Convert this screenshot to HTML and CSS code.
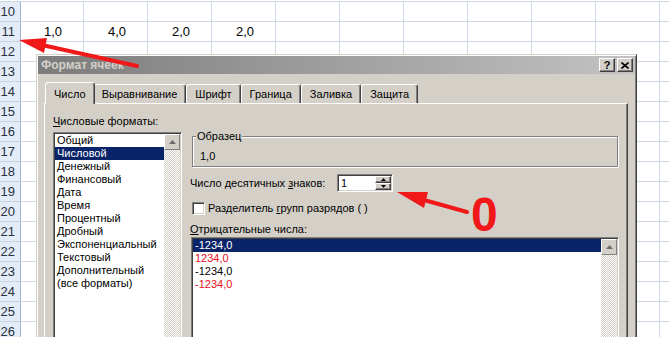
FILE: index.html
```html
<!DOCTYPE html>
<html lang="ru">
<head>
    <meta charset="UTF-8">
    <meta name="viewport" content="width=device-width, initial-scale=1.0">
    <title>Формат ячеек</title>
    <link rel="stylesheet" href="styles.css">
</head>
<body>

<!-- Worksheet behind the dialog -->
<div class="sheet">
    <div class="row"><div class="rh">10</div><div class="cells"></div></div>
    <div class="row"><div class="rh">11</div><div class="cells">
        <span class="cell">1,0</span><span class="cell">4,0</span><span class="cell">2,0</span><span class="cell">2,0</span>
    </div></div>
    <div class="row"><div class="rh">12</div><div class="cells"></div></div>
    <div class="row"><div class="rh">13</div><div class="cells"></div></div>
    <div class="row"><div class="rh">14</div><div class="cells"></div></div>
    <div class="row"><div class="rh">15</div><div class="cells"></div></div>
    <div class="row"><div class="rh">16</div><div class="cells"></div></div>
    <div class="row"><div class="rh">17</div><div class="cells"></div></div>
    <div class="row"><div class="rh">18</div><div class="cells"></div></div>
    <div class="row"><div class="rh">19</div><div class="cells"></div></div>
    <div class="row"><div class="rh">20</div><div class="cells"></div></div>
    <div class="row"><div class="rh">21</div><div class="cells"></div></div>
    <div class="row"><div class="rh">22</div><div class="cells"></div></div>
    <div class="row"><div class="rh">23</div><div class="cells"></div></div>
    <div class="row"><div class="rh">24</div><div class="cells"></div></div>
    <div class="row"><div class="rh">25</div><div class="cells"></div></div>
    <div class="row"><div class="rh">26</div><div class="cells"></div></div>
</div>

<!-- Format Cells dialog -->
<div class="dialog">
    <div class="titlebar">
        <span class="title">Формат ячеек</span>
        <span class="tb-btn">?</span>
        <span class="tb-btn">
            <svg width="8" height="7" viewBox="0 0 8 7"><path d="M0.5 0.5 L7.5 6.5 M7.5 0.5 L0.5 6.5" stroke="#000" stroke-width="1.6"/></svg>
        </span>
    </div>

    <div class="dlg-body">
        <div class="tabs">
            <div class="tab active">Число</div>
            <div class="tab">Выравнивание</div>
            <div class="tab">Шрифт</div>
            <div class="tab">Граница</div>
            <div class="tab">Заливка</div>
            <div class="tab">Защита</div>
        </div>

        <div class="panel">
            <div class="col-left">
                <div class="label"><u>Ч</u>исловые форматы:</div>
                <div class="listbox formats">
                    <ul class="items">
                        <li>Общий</li>
                        <li class="sel">Числовой</li>
                        <li>Денежный</li>
                        <li>Финансовый</li>
                        <li>Дата</li>
                        <li>Время</li>
                        <li>Процентный</li>
                        <li>Дробный</li>
                        <li>Экспоненциальный</li>
                        <li>Текстовый</li>
                        <li>Дополнительный</li>
                        <li>(все форматы)</li>
                    </ul>
                    <div class="vscroll">
                        <span class="sb-up"><svg width="7" height="4" viewBox="0 0 7 4"><polygon points="3.5,0 7,4 0,4" fill="#6b6b6b"/></svg></span>
                    </div>
                </div>
            </div>

            <div class="col-right">
                <fieldset class="sample">
                    <legend>Образец</legend>
                    <div>1,0</div>
                </fieldset>

                <div class="decimals">
                    <span class="dec-label">Число десятичных <u>з</u>наков:</span>
                    <div class="spin">
                        <span class="spin-val">1</span>
                        <div class="spin-btns">
                            <span><svg width="5" height="3" viewBox="0 0 5 3"><polygon points="2.5,0 5,3 0,3" fill="#000"/></svg></span>
                            <span><svg width="5" height="3" viewBox="0 0 5 3"><polygon points="0,0 5,0 2.5,3" fill="#000"/></svg></span>
                        </div>
                    </div>
                </div>

                <div class="check">
                    <span class="box"></span>
                    <span>Разделитель <u>г</u>рупп разрядов ( )</span>
                </div>

                <div class="label neg-label"><u>О</u>трицательные числа:</div>
                <div class="listbox negatives">
                    <ul class="items">
                        <li class="sel">-1234,0</li>
                        <li class="red">1234,0</li>
                        <li>-1234,0</li>
                        <li class="red">-1234,0</li>
                    </ul>
                    <div class="vscroll">
                        <span class="sb-up"><svg width="7" height="4" viewBox="0 0 7 4"><polygon points="3.5,0 7,4 0,4" fill="#6b6b6b"/></svg></span>
                    </div>
                </div>
            </div>
        </div>
    </div>
</div>

<!-- Red annotation arrows drawn over the screenshot -->
<svg class="marks" width="669" height="337" viewBox="0 0 669 337">
    <line x1="137" y1="66" x2="42" y2="45" stroke="#f01818" stroke-width="4" stroke-linecap="round"/>
    <polygon points="19,40 47,38 44,53" fill="#f01818"/>
    <line x1="467" y1="212" x2="424" y2="200" stroke="#f01818" stroke-width="4" stroke-linecap="round"/>
    <polygon points="397,192 428,192 424,208" fill="#f01818"/>
</svg>
<div class="zero">0</div>

</body>
</html>
```

FILE: styles.css
```css
/* Page */
body {
    margin: 0;
    width: 669px;
    height: 337px;
    overflow: hidden;
    position: relative;
    background: #ffffff;
    font-family: "Liberation Sans", Arial, sans-serif;
}

/* Worksheet grid */
.sheet {
    margin-top: 1px;
    border-top: 1px solid #d0d7e5;
}

.row {
    display: flex;
    height: 20px;
}

.rh {
    width: 21px;
    box-sizing: border-box;
    padding-right: 5px;
    text-align: right;
    font-size: 13px;
    line-height: 19px;
    color: #27313f;
    background: #e4ecf7;
    border-right: 1px solid #9eb6ce;
    border-bottom: 1px solid #c5d3e5;
}

.cells {
    flex: 1;
    display: flex;
    box-sizing: border-box;
    border-bottom: 1px solid #d0d7e5;
    background-image: linear-gradient(to right, transparent 62px, #d0d7e5 62px, #d0d7e5 63px, transparent 63px);
    background-size: 64px 100%;
}

.cell {
    width: 64px;
    text-align: center;
    font-size: 13px;
    line-height: 19px;
    color: #000;
}

/* Dialog window */
.dialog {
    position: absolute;
    left: 36px;
    top: 54px;
    width: 601px;
    height: 300px;
    box-sizing: border-box;
    padding: 1px;
    background: #d4d0c8;
    border: 1px solid;
    border-color: #d4d0c8 #404040 #404040 #d4d0c8;
    box-shadow: inset 1px 1px #ffffff, inset -1px -1px #808080;
    font-size: 11px;
    color: #000;
}

.titlebar {
    display: flex;
    align-items: center;
    height: 18px;
    padding: 0 2px 0 3px;
    background: linear-gradient(to right, #7c7c7c, #c2c2c2);
}

.title {
    flex: 1;
    font-weight: bold;
    font-size: 12px;
    color: #d4d0c8;
}

.tb-btn {
    width: 16px;
    height: 14px;
    box-sizing: border-box;
    margin-left: 2px;
    display: flex;
    align-items: center;
    justify-content: center;
    background: #d4d0c8;
    border: 1px solid;
    border-color: #ffffff #404040 #404040 #ffffff;
    box-shadow: inset -1px -1px #808080;
    font-weight: bold;
    font-size: 11px;
    line-height: 11px;
}

.dlg-body {
    padding: 8px 7px 0 6px;
}

/* Tabs */
.tabs {
    display: flex;
    align-items: flex-end;
    height: 21px;
    padding-left: 3px;
    position: relative;
    z-index: 1;
}

.tab {
    height: 19px;
    box-sizing: border-box;
    padding: 3px 8px 0;
    line-height: 13px;
    white-space: nowrap;
    background: #d4d0c8;
    border: 1px solid;
    border-bottom: 0;
    border-color: #ffffff #404040 transparent #ffffff;
    box-shadow: inset -1px 0 #808080;
    border-radius: 3px 3px 0 0;
}

.tab.active {
    height: 22px;
    margin: 0 -2px -1px;
    padding-top: 5px;
    position: relative;
    z-index: 2;
}

/* Tab page */
.panel {
    display: flex;
    gap: 8px;
    height: 240px;
    padding: 11px 8px 0 8px;
    border: 1px solid;
    border-color: #ffffff #404040 #404040 #ffffff;
    box-shadow: inset -1px -1px #808080;
}

.label {
    line-height: 13px;
    white-space: nowrap;
}

.col-left {
    width: 129px;
}

.col-right {
    flex: 1;
    padding-top: 15px;
}

/* List boxes */
.listbox {
    display: flex;
    box-sizing: border-box;
    padding: 1px;
    background: #ffffff;
    border: 1px solid;
    border-color: #808080 #ffffff #ffffff #808080;
    box-shadow: inset 1px 1px #404040, inset -1px -1px #d4d0c8;
}

.formats {
    margin-top: 4px;
    height: 210px;
}

.negatives {
    margin: 1px 0 0 1px;
    height: 110px;
}

.items {
    flex: 1;
    list-style: none;
    margin: 0;
    padding: 0;
}

.items li {
    padding-left: 2px;
    line-height: 13px;
    white-space: nowrap;
}

.items li.sel {
    background: #0a246a;
    color: #ffffff;
}

.items li.red {
    color: #e8101c;
}

.vscroll {
    width: 16px;
    background: repeating-conic-gradient(#d4d0c8 0 25%, #ffffff 0 50%) 0 0 / 2px 2px;
}

.sb-up {
    width: 16px;
    height: 16px;
    box-sizing: border-box;
    display: flex;
    align-items: center;
    justify-content: center;
    background: #d4d0c8;
    border: 1px solid;
    border-color: #ffffff #808080 #808080 #ffffff;
}

/* Sample group box */
.sample {
    margin: 0 1px 0 2px;
    padding: 7px 7px 3px;
    border: 1px solid #808080;
    box-shadow: inset 1px 1px #ffffff, 1px 1px #ffffff;
    line-height: 13px;
}

.sample legend {
    margin-left: -4px;
    padding: 0 1px;
    line-height: 13px;
    background: #d4d0c8;
}

/* Decimal places spinner */
.decimals {
    display: flex;
    align-items: center;
    margin-top: 7px;
}

.dec-label {
    width: 147px;
    white-space: nowrap;
}

.spin {
    display: flex;
    width: 56px;
    height: 18px;
    box-sizing: border-box;
    padding: 1px;
    background: #ffffff;
    border: 1px solid;
    border-color: #808080 #ffffff #ffffff #808080;
    box-shadow: inset 1px 1px #404040, inset -1px -1px #d4d0c8;
}

.spin-val {
    flex: 1;
    padding-left: 2px;
    line-height: 14px;
}

.spin-btns {
    width: 16px;
    display: flex;
    flex-direction: column;
}

.spin-btns span {
    flex: 1;
    display: flex;
    align-items: center;
    justify-content: center;
    background: #d4d0c8;
    border: 1px solid;
    border-color: #ffffff #404040 #404040 #ffffff;
    box-shadow: inset -1px -1px #808080;
}

/* Checkbox */
.check {
    display: flex;
    align-items: center;
    gap: 3px;
    margin: 10px 0 0 2px;
    line-height: 13px;
    white-space: nowrap;
}

.box {
    width: 13px;
    height: 13px;
    box-sizing: border-box;
    background: #ffffff;
    border: 1px solid;
    border-color: #808080 #ffffff #ffffff #808080;
    box-shadow: inset 1px 1px #404040, inset -1px -1px #d4d0c8;
}

.neg-label {
    margin-top: 8px;
}

/* Annotations */
.marks {
    position: absolute;
    left: 0;
    top: 0;
    pointer-events: none;
}

.zero {
    position: absolute;
    left: 471px;
    top: 191px;
    font-family: "Liberation Sans", Arial, sans-serif;
    font-weight: bold;
    font-size: 48px;
    line-height: 48px;
    color: #f01818;
}
```
